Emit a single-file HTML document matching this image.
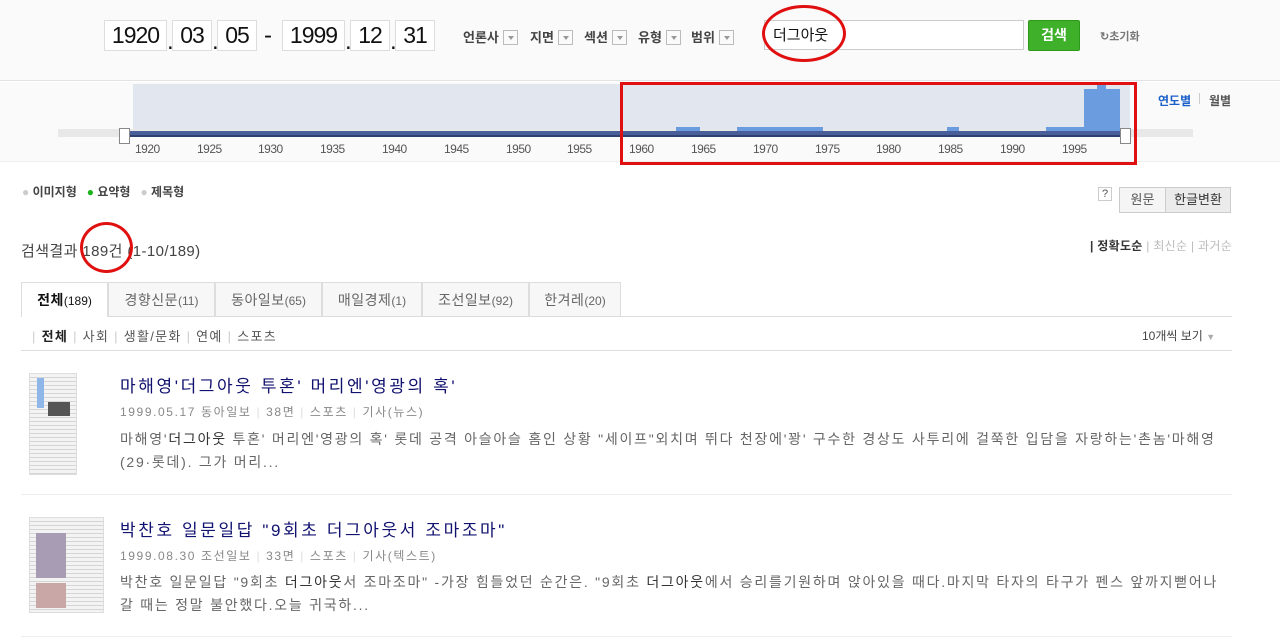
<!DOCTYPE html>
<html><head><meta charset="utf-8"><style>
*{margin:0;padding:0;box-sizing:border-box}
body{width:1280px;height:640px;overflow:hidden;background:#fff;font-family:"Liberation Sans","Noto Sans CJK KR",sans-serif;position:relative;color:#333}
.a{position:absolute;white-space:nowrap}
.box{position:absolute;top:20px;height:31px;border:1px solid #ddd;background:#fff;font-size:23px;line-height:29px;text-align:center;color:#111;font-family:"Liberation Sans",sans-serif;letter-spacing:-1px}
.dot{position:absolute;top:28px;font-size:24px;color:#111}
.dd{position:absolute;top:27px;font-size:13px;font-weight:bold;color:#444}
.dd i{display:inline-block;width:15px;height:15px;border:1px solid #bbb;background:#fafafa;vertical-align:-3px;margin-left:4px;position:relative}
.dd i:after{content:"";position:absolute;left:4px;top:5px;border-left:3px solid transparent;border-right:3px solid transparent;border-top:4px solid #999}
.yr{position:absolute;top:142px;font-size:12px;color:#555;letter-spacing:-0.5px}
.bar{position:absolute;background:#6b9ce0}
.tab{position:absolute;top:282px;height:34px;border:1px solid #ddd;border-bottom:none;background:#f7f7f7;font-size:14px;color:#666;line-height:34px;text-align:center;letter-spacing:0.5px}
.tab small{font-size:12px;letter-spacing:0}
.ttl{font-size:17px;color:#111170;letter-spacing:2.6px}
.meta{font-size:12px;color:#888;letter-spacing:1.6px}
.desc{font-size:14px;line-height:23px;color:#666;letter-spacing:1.75px}
</style></head><body>
<div class="a" style="left:0;top:0;width:1280px;height:81px;background:#fafafa;border-bottom:1px solid #e3e3e3"></div>
<div class="box" style="left:104px;width:63px">1920</div><div class="dot" style="left:167px">.</div>
<div class="box" style="left:172px;width:40px">03</div><div class="dot" style="left:212px">.</div>
<div class="box" style="left:217px;width:40px">05</div>
<div class="a" style="left:264px;top:22px;font-size:24px;color:#111">-</div>
<div class="box" style="left:282px;width:63px">1999</div><div class="dot" style="left:345px">.</div>
<div class="box" style="left:350px;width:40px">12</div><div class="dot" style="left:390px">.</div>
<div class="box" style="left:395px;width:40px">31</div>
<div class="dd" style="left:463px">언론사<i></i></div>
<div class="dd" style="left:530px">지면<i></i></div>
<div class="dd" style="left:584px">섹션<i></i></div>
<div class="dd" style="left:638px">유형<i></i></div>
<div class="dd" style="left:691px">범위<i></i></div>
<div class="a" style="left:764px;top:20px;width:260px;height:30px;border:1px solid #ccc;background:#fff;font-size:15px;line-height:30px;padding-left:8px;color:#111">더그아웃</div>
<div class="a" style="left:1028px;top:20px;width:52px;height:31px;background:#3fb02a;border:1px solid #2e9a1c;border-radius:2px;color:#fff;font-weight:bold;font-size:14px;line-height:29px;text-align:center">검색</div>
<div class="a" style="left:1100px;top:28px;font-size:11px;color:#777;font-weight:bold">↻초기화</div>
<div class="a" style="left:762px;top:5px;width:84px;height:57px;border:3px solid #e01010;border-radius:50%"></div>

<div class="a" style="left:0;top:82px;width:1280px;height:80px;background:#fafafa;border-bottom:1px solid #eee"></div>
<div class="a" style="left:133px;top:84px;width:997px;height:47px;background:#e2e7ef"></div>
<div class="a" style="left:58px;top:129px;width:1135px;height:8px;background:#e8e8e8"></div>
<div class="a" style="left:130px;top:131px;width:1000px;height:6px;background:#4a5f9a;border-bottom:2px solid #2e3f70"></div>
<div class="bar" style="left:676px;top:127px;width:24px;height:4px"></div>
<div class="bar" style="left:737px;top:127px;width:86px;height:4px"></div>
<div class="bar" style="left:947px;top:127px;width:12px;height:4px"></div>
<div class="bar" style="left:1046px;top:127px;width:38px;height:4px"></div>
<div class="bar" style="left:1084px;top:89px;width:36px;height:42px"></div>
<div class="bar" style="left:1097px;top:84px;width:9px;height:6px"></div>
<div class="a" style="left:119px;top:128px;width:11px;height:16px;background:#fff;border:1px solid #888"></div>
<div class="a" style="left:1120px;top:128px;width:11px;height:16px;background:#fff;border:1px solid #888"></div>
<div class="yr" style="left:135px">1920</div><div class="yr" style="left:197px">1925</div><div class="yr" style="left:258px">1930</div><div class="yr" style="left:320px">1935</div><div class="yr" style="left:382px">1940</div><div class="yr" style="left:444px">1945</div><div class="yr" style="left:506px">1950</div><div class="yr" style="left:567px">1955</div><div class="yr" style="left:629px">1960</div><div class="yr" style="left:691px">1965</div><div class="yr" style="left:753px">1970</div><div class="yr" style="left:815px">1975</div><div class="yr" style="left:876px">1980</div><div class="yr" style="left:938px">1985</div><div class="yr" style="left:1000px">1990</div><div class="yr" style="left:1062px">1995</div>
<div class="a" style="left:1158px;top:92px;font-size:12px;color:#1a5fc9;font-weight:bold">연도별</div>
<div class="a" style="left:1199px;top:93px;width:1px;height:11px;background:#ccc"></div>
<div class="a" style="left:1209px;top:92px;font-size:12px;color:#555;font-weight:bold">월별</div>
<div class="a" style="left:620px;top:82px;width:517px;height:83px;border:3px solid #e01010"></div>

<div class="a" style="left:22px;top:183px;font-size:12px;font-weight:bold;color:#444"><span style="color:#ccc">●</span> 이미지형 &nbsp;&nbsp;<span style="color:#1db31d">●</span> 요약형 &nbsp;&nbsp;<span style="color:#ccc">●</span> 제목형</div>
<div class="a" style="left:1098px;top:187px;width:14px;height:14px;border:1px solid #ccc;font-size:11px;line-height:12px;text-align:center;color:#555">?</div>
<div class="a" style="left:1119px;top:187px;width:112px;height:26px;border:1px solid #ccc;background:#f5f5f5;font-size:13px;line-height:24px;color:#555"><span style="display:inline-block;width:45px;text-align:center">원문</span><span style="display:inline-block;width:65px;text-align:center;background:#ebebeb;border-left:1px solid #ccc;color:#333">한글변환</span></div>
<div class="a" style="left:21px;top:240px;font-size:15px;color:#444;letter-spacing:0.4px">검색결과 189건 (1-10/189)</div>
<div class="a" style="left:80px;top:222px;width:53px;height:51px;border:3px solid #e01010;border-radius:50%"></div>
<div class="a" style="left:1090px;top:237px;font-size:12px;color:#bbb;letter-spacing:0.3px"><span style="color:#333;font-weight:bold">| 정확도순</span> | 최신순 | 과거순</div>

<div class="a" style="left:21px;top:316px;width:1211px;height:1px;background:#ddd"></div>
<div class="tab" style="left:21px;width:87px;background:#fff;color:#111;height:35px;font-weight:bold">전체<small style="font-weight:normal">(189)</small></div>
<div class="tab" style="left:108px;width:107px">경향신문<small>(11)</small></div>
<div class="tab" style="left:215px;width:107px">동아일보<small>(65)</small></div>
<div class="tab" style="left:322px;width:100px">매일경제<small>(1)</small></div>
<div class="tab" style="left:422px;width:107px">조선일보<small>(92)</small></div>
<div class="tab" style="left:529px;width:92px">한겨레<small>(20)</small></div>
<div class="a" style="left:21px;top:317px;width:1211px;height:34px;border-bottom:1px solid #ddd"></div>
<div class="a" style="left:32px;top:326px;font-size:13px;color:#555;letter-spacing:1.3px"><span style="color:#ccc">|</span> <b style="color:#222">전체</b> <span style="color:#ccc">|</span> 사회 <span style="color:#ccc">|</span> 생활/문화 <span style="color:#ccc">|</span> 연예 <span style="color:#ccc">|</span> 스포츠</div>
<div class="a" style="left:1142px;top:327px;font-size:12px;color:#444">10개씩 보기 <span style="color:#aaa;font-size:9px">▼</span></div>

<div class="a" style="left:29px;top:373px;width:48px;height:102px;border:1px solid #ddd;background:repeating-linear-gradient(#f3f3f3 0 3px,#d5d5d5 3px 4px)"><div style="position:absolute;left:7px;top:4px;width:7px;height:30px;background:#8fb6e8"></div><div style="position:absolute;left:18px;top:28px;width:22px;height:14px;background:#555"></div></div>
<div class="a ttl" style="left:120px;top:372px">마해영'더그아웃 투혼' 머리엔'영광의 혹'</div>
<div class="a meta" style="left:120px;top:403px">1999.05.17 동아일보 <span style="color:#ddd">|</span> 38면 <span style="color:#ddd">|</span> 스포츠 <span style="color:#ddd">|</span> 기사(뉴스)</div>
<div class="a desc" style="left:120px;top:428px">마해영'<span style="color:#333">더그아웃</span> 투혼' 머리엔'영광의 혹' 롯데 공격 아슬아슬 홈인 상황 "세이프"외치며 뛰다 천장에'꽝' 구수한 경상도 사투리에 걸쭉한 입담을 자랑하는'촌놈'마해영<br>(29·롯데). 그가 머리...</div>
<div class="a" style="left:21px;top:494px;width:1211px;height:1px;background:#eee"></div>

<div class="a" style="left:29px;top:517px;width:75px;height:96px;border:1px solid #ddd;background:repeating-linear-gradient(#f3f3f3 0 3px,#d5d5d5 3px 4px)"><div style="position:absolute;left:6px;top:15px;width:30px;height:45px;background:#a79cb4"></div><div style="position:absolute;left:6px;top:65px;width:30px;height:25px;background:#c9a7a7"></div></div>
<div class="a ttl" style="left:120px;top:516px">박찬호 일문일답 "9회초 더그아웃서 조마조마"</div>
<div class="a meta" style="left:120px;top:547px">1999.08.30 조선일보 <span style="color:#ddd">|</span> 33면 <span style="color:#ddd">|</span> 스포츠 <span style="color:#ddd">|</span> 기사(텍스트)</div>
<div class="a desc" style="left:120px;top:571px">박찬호 일문일답 "9회초 <span style="color:#333">더그아웃</span>서 조마조마" -가장 힘들었던 순간은. "9회초 <span style="color:#333">더그아웃</span>에서 승리를기원하며 앉아있을 때다.마지막 타자의 타구가 펜스 앞까지뻗어나<br>갈 때는 정말 불안했다.오늘 귀국하...</div>
<div class="a" style="left:21px;top:636px;width:1211px;height:1px;background:#eee"></div>
</body></html>
